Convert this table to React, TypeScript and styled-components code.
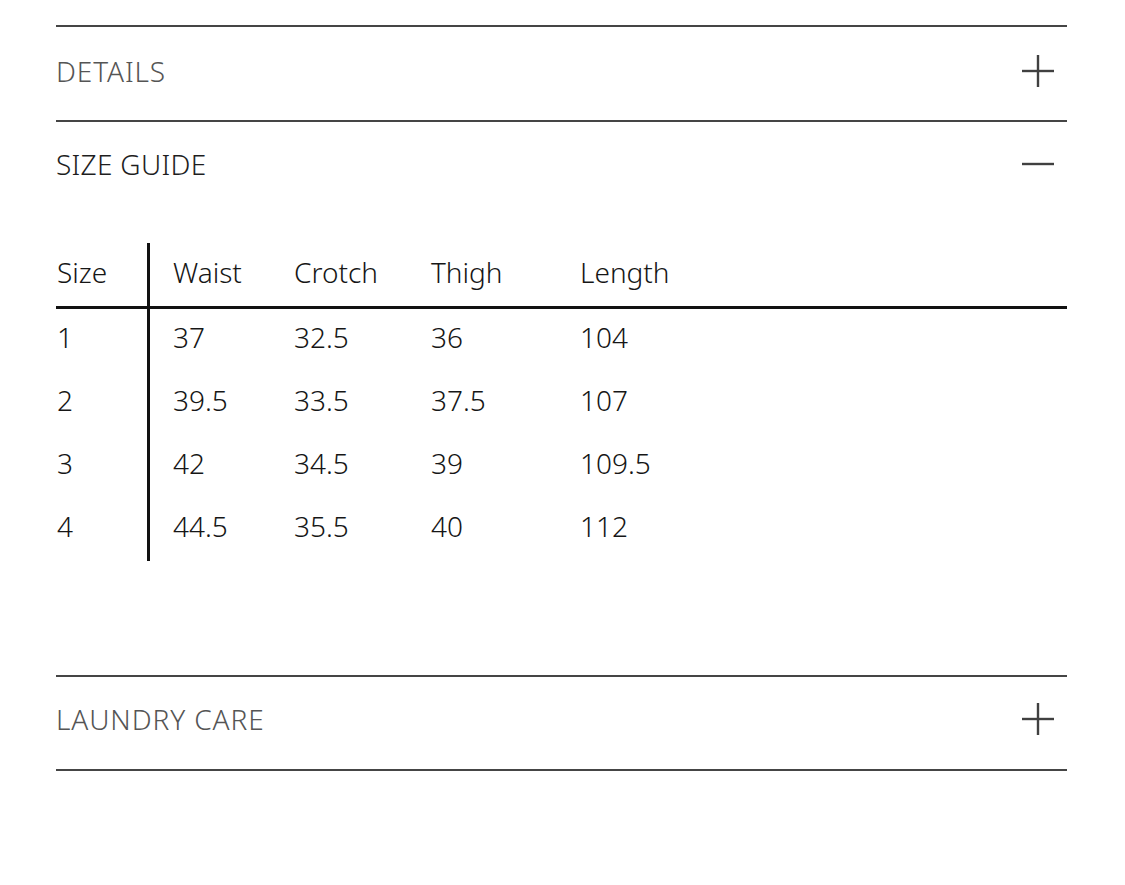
import styled, { createGlobalStyle } from 'styled-components';

const GlobalStyle = createGlobalStyle`
    body {
        margin: 0;
        background: #ffffff;
        font-family: "Noto Sans", "Open Sans", sans-serif;
    }
`;

const Page = styled.div`
    padding: 25px 58px 0 56px;
    width: 1011px;
`;

const Section = styled.section<{ $last?: boolean }>`
    border-top: 2px solid #454545;
    border-bottom: ${props => (props.$last ? '2px solid #454545' : 'none')};
`;

const Header = styled.div<{ $height: number; $pad?: number }>`
    display: flex;
    align-items: center;
    justify-content: space-between;
    height: ${props => props.$height}px;
    padding-bottom: ${props => props.$pad ?? 6}px;
    box-sizing: border-box;
`;

const Title = styled.h2<{ $active?: boolean }>`
    margin: 0;
    font-size: 28px;
    font-weight: 300;
    letter-spacing: ${props => (props.$active ? '0.3px' : '0.9px')};
    color: ${props => (props.$active ? '#1e1e1e' : '#555555')};
`;

const Toggle = styled.button`
    border: none;
    background: transparent;
    padding: 0;
    margin-right: 13px;
    width: 32px;
    height: 32px;
    display: flex;
    cursor: pointer;
`;

const Table = styled.div`
    display: grid;
    grid-template-columns: 91px 146px 137px 149px 1fr;
    margin-top: 31px;
    margin-bottom: 114px;
    color: #161616;
    font-size: 28px;
    font-weight: 300;
`;

const Cell = styled.div<{ $head?: boolean; $divider?: boolean }>`
    display: flex;
    align-items: center;
    height: ${props => (props.$head ? 66 : 63)}px;
    box-sizing: border-box;
    padding-bottom: ${props => (props.$head ? 5 : 8)}px;
    padding-left: ${props => (props.$divider ? 23 : 1)}px;
    border-left: ${props => (props.$divider ? '3px solid #111' : 'none')};
    border-bottom: ${props => (props.$head ? '3px solid #111' : 'none')};
`;

const Icon = ({ open }: { open?: boolean }) => (
    <svg width="32" height="32" viewBox="0 0 32 32">
        <line x1="0" y1="16" x2="32" y2="16" stroke="#404040" strokeWidth="2.4" />
        {!open && <line x1="16" y1="0" x2="16" y2="32" stroke="#404040" strokeWidth="2.4" />}
    </svg>
);

const headings = ['Size', 'Waist', 'Crotch', 'Thigh', 'Length'];
const rows = [
    ['1', '37', '32.5', '36', '104'],
    ['2', '39.5', '33.5', '37.5', '107'],
    ['3', '42', '34.5', '39', '109.5'],
    ['4', '44.5', '35.5', '40', '112'],
];

const App = () => {
    return (
        <Page>
            <GlobalStyle />
            <Section>
                <Header $height={93}>
                    <Title>DETAILS</Title>
                    <Toggle><Icon /></Toggle>
                </Header>
            </Section>
            <Section>
                <Header $height={90}>
                    <Title $active>SIZE GUIDE</Title>
                    <Toggle><Icon open /></Toggle>
                </Header>
                <Table>
                    {headings.map((h, i) => (
                        <Cell key={h} $head $divider={i === 1}>{h}</Cell>
                    ))}
                    {rows.map(r =>
                        r.map((v, i) => (
                            <Cell key={r[0] + '-' + i} $divider={i === 1}>{v}</Cell>
                        ))
                    )}
                </Table>
            </Section>
            <Section $last>
                <Header $height={92} $pad={8}>
                    <Title>LAUNDRY CARE</Title>
                    <Toggle><Icon /></Toggle>
                </Header>
            </Section>
        </Page>
    );
};

export default App;
